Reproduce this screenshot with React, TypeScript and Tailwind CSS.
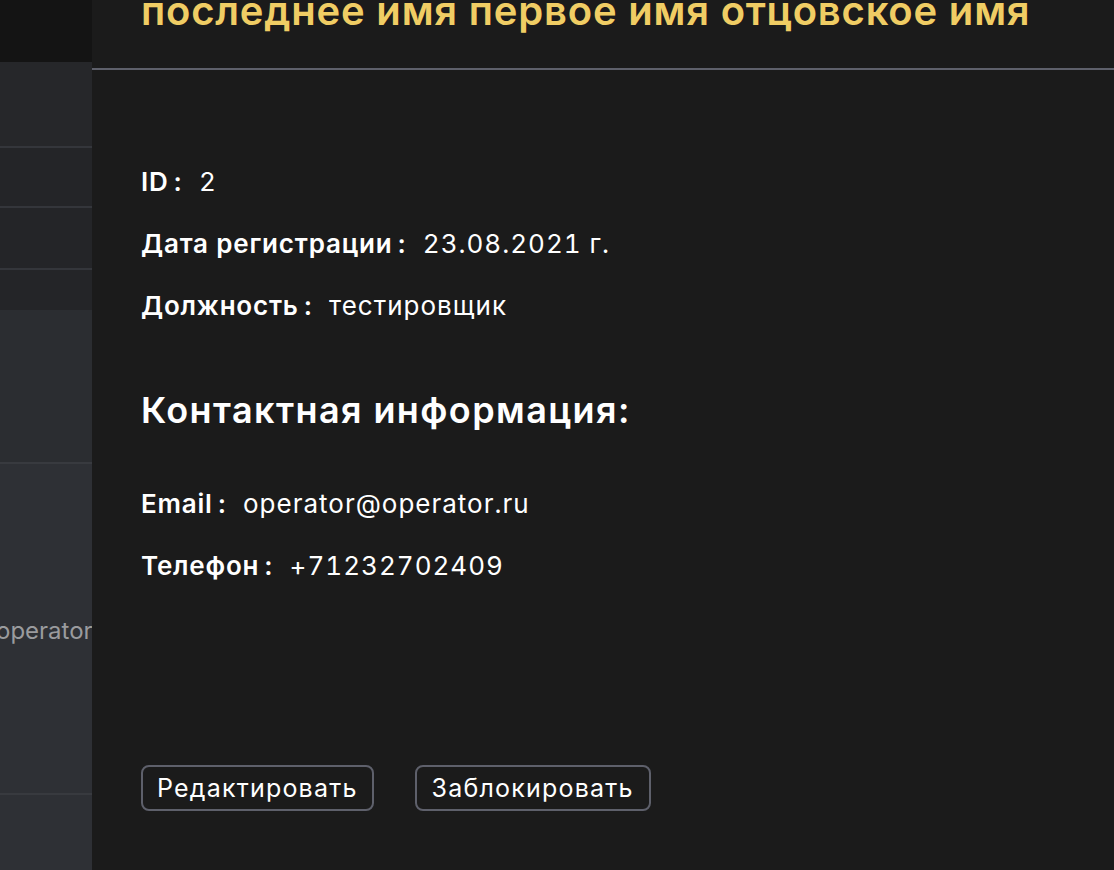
import React from 'react'

const font = { fontFamily: 'Inter, "Noto Sans", sans-serif' }

function Field({ label, value }: { label: string; value: string }) {
  return (
    <div className="flex items-baseline text-[26px] leading-[32px] text-white">
      <span className="font-semibold tracking-[0.8px]">{label}</span>
      <span className="ml-[5px] mr-[17px] font-semibold">:</span>
      <span className="tracking-[1px] tabular-nums">{value}</span>
    </div>
  )
}

function BackgroundStrip() {
  return (
    <div className="w-[92px] shrink-0 flex flex-col">
      <div className="h-[62px] bg-[#141414]" />
      <div className="h-[86px] bg-[#26272a] border-b-2 border-[#34363b]" />
      <div className="h-[60px] bg-[#242528] border-b-2 border-[#34363b]" />
      <div className="h-[62px] bg-[#242528] border-b-2 border-[#34363b]" />
      <div className="h-[40px] bg-[#242528]" />
      <div className="h-[154px] bg-[#2b2d31] border-b-2 border-[#383a3f]" />
      <div className="h-[331px] bg-[#2e3035] border-b-2 border-[#383a3f] flex flex-col justify-center overflow-hidden">
        <span className="text-[24px] leading-[32px] text-[#9a9b9e] -ml-[4px] whitespace-nowrap mt-[4px]">operator</span>
      </div>
      <div className="flex-1 bg-[#2e3035]" />
    </div>
  )
}

export default function App() {
  return (
    <div className="flex w-[1114px] h-[870px] overflow-hidden bg-[#1b1b1b]" style={font}>
      <BackgroundStrip />
      <div className="flex-1 flex flex-col bg-[#1b1b1b]">
        <div className="h-[70px] shrink-0 border-b-2 border-[#5e606b] pl-[49px] overflow-hidden">
          <h1 className="text-[40px] leading-[48px] tracking-[0.8px] font-semibold text-[#f0cd64] whitespace-nowrap -mt-[13px]">
            последнее имя первое имя отцовское имя
          </h1>
        </div>
        <div className="flex-1 flex flex-col px-[49px] pt-[96px]">
          <div className="flex flex-col gap-[30px]">
            <Field label="ID" value="2" />
            <Field label="Дата регистрации" value="23.08.2021 г." />
            <Field label="Должность" value="тестировщик" />
          </div>
          <h2 className="mt-[66px] text-[36px] leading-[44px] tracking-[1.4px] font-semibold text-white">
            Контактная информация:
          </h2>
          <div className="mt-[56px] flex flex-col gap-[30px]">
            <Field label="Email" value="operator@operator.ru" />
            <Field label="Телефон" value="+71232702409" />
          </div>
          <div className="mt-[183px] flex gap-[41px]">
            <button className="h-[46px] px-[14px] rounded-[8px] border-2 border-[#5e606b] text-white text-[25px] leading-none tracking-[1.2px]">
              Редактировать
            </button>
            <button className="h-[46px] px-[15px] rounded-[8px] border-2 border-[#5e606b] text-white text-[25px] leading-none tracking-[1.2px]">
              Заблокировать
            </button>
          </div>
        </div>
      </div>
    </div>
  )
}
